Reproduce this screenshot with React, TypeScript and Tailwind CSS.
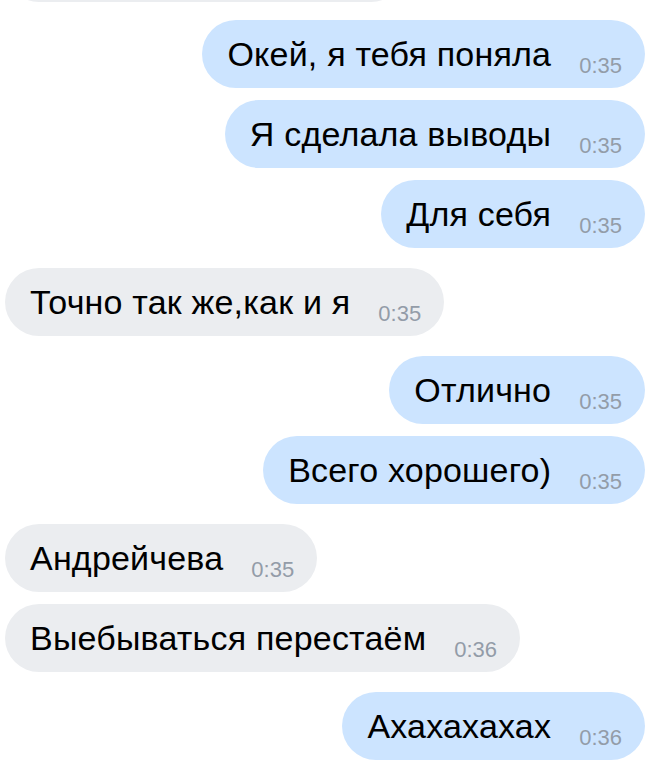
const messages = [
  { id: 1, text: "Окей, я тебя поняла", time: "0:35", out: true },
  { id: 2, text: "Я сделала выводы", time: "0:35", out: true },
  { id: 3, text: "Для себя", time: "0:35", out: true },
  { id: 4, text: "Точно так же,как и я", time: "0:35", out: false },
  { id: 5, text: "Отлично", time: "0:35", out: true },
  { id: 6, text: "Всего хорошего)", time: "0:35", out: true },
  { id: 7, text: "Андрейчева", time: "0:35", out: false },
  { id: 8, text: "Выебываться перестаём", time: "0:36", out: false },
  { id: 9, text: "Ахахахахах", time: "0:36", out: true },
];

function Bubble({ text, time, out }: { text: string; time: string; out: boolean }) {
  return (
    <div
      className={
        "h-[68px] rounded-full flex items-end pl-[25px] pr-[23px] pb-[11px] " +
        (out ? "bg-[#cce4ff]" : "bg-[#ebedf0]")
      }
    >
      <span className="text-[34px] tracking-[0.2px] leading-none text-black mb-[6px] whitespace-nowrap">
        {text}
      </span>
      <span className="text-[22px] leading-none text-[#939ca8] ml-[28px] whitespace-nowrap">{time}</span>
    </div>
  );
}

export default function App() {
  return (
    <div
      className="w-[665px] h-[772px] bg-white overflow-hidden flex flex-col pl-[5px] pr-[20px]"
      style={{ fontFamily: '"Liberation Sans", Arial, sans-serif' }}
    >
      {/* previous message, cut off at the top */}
      <div className="self-start w-[400px] h-[68px] mt-[-66px] rounded-full bg-[#ebedf0]" />

      {messages.map((m, i) => {
        const prev = i === 0 ? null : messages[i - 1];
        const gap = prev === null ? "mt-[18px]" : prev.out === m.out ? "mt-[12px]" : "mt-[20px]";
        return (
          <div key={m.id} className={`${gap} ${m.out ? "self-end" : "self-start"}`}>
            <Bubble text={m.text} time={m.time} out={m.out} />
          </div>
        );
      })}
    </div>
  );
}
